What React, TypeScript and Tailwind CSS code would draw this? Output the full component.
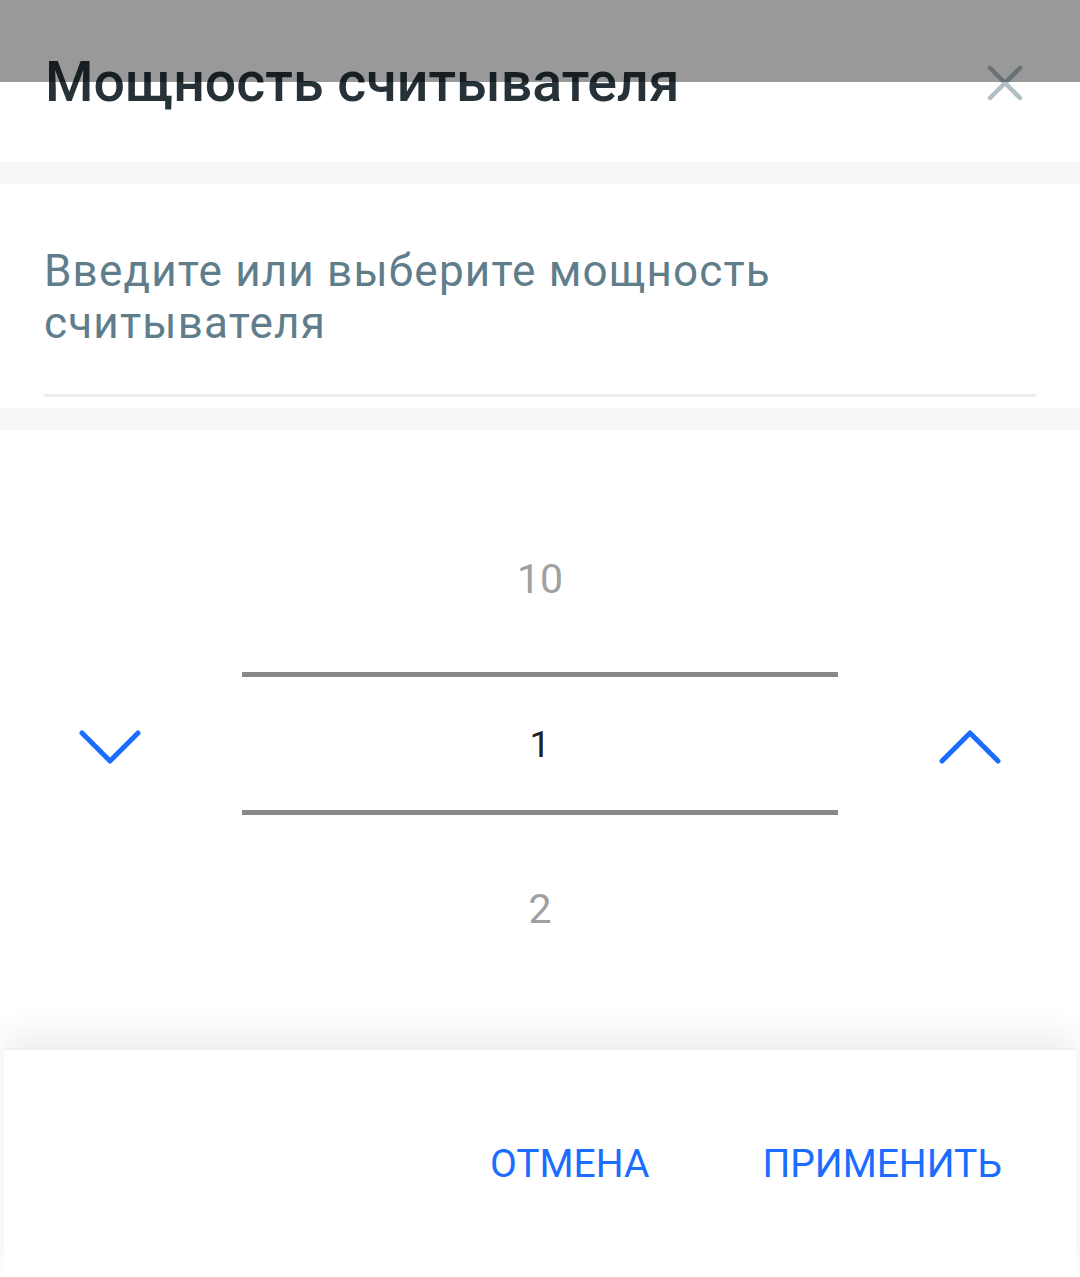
import React from 'react';

const Chevron = ({ up }: { up?: boolean }) => (
  <svg width="62" height="36" viewBox="0 0 62 36" fill="none">
    <path
      d={up ? 'M3 32 L31 4 L59 32' : 'M3 4 L31 32 L59 4'}
      stroke="#1a6dff"
      strokeWidth="5"
      strokeLinecap="round"
      strokeLinejoin="round"
    />
  </svg>
);

export default function App() {
  return (
    <div className="relative w-[1080px] h-[1277px] bg-white overflow-hidden font-['Roboto',sans-serif] flex flex-col">
      {/* Header */}
      <div className="h-[162px] flex items-center justify-between pl-[45px] pr-[57px] pt-[4px]">
        <h1 className="text-[55.5px] font-medium text-[#263238] leading-none">Мощность считывателя</h1>
        <svg width="36" height="36" viewBox="0 0 36 36" fill="none">
          <path d="M3 3 L33 33 M33 3 L3 33" stroke="#b0bec5" strokeWidth="4.5" strokeLinecap="round" />
        </svg>
      </div>

      <div className="h-[22px] bg-[#f5f6f8]" />

      {/* Input */}
      <div className="h-[224px] px-[44px] pt-[61px] flex flex-col">
        <p className="max-w-[800px] text-[44px] leading-[52px] text-[#607d8b] tracking-[1.2px]">
          Введите или выберите мощность считывателя
        </p>
        <div className="mt-auto mb-[11px] h-[3px] bg-[#eceff1]" />
      </div>

      <div className="h-[22px] bg-[#f5f6f8]" />

      {/* Picker */}
      <div className="flex items-center pt-[58px]">
        <div className="w-[242px] pl-[79px] flex items-center">
          <Chevron />
        </div>
        <div className="w-[596px] flex flex-col">
          <div className="h-[184px] flex items-center justify-center text-[41px] text-[#a0a0a0]">10</div>
          <div className="h-[5px] bg-[#888888]" />
          <div className="h-[133px] flex items-center justify-center text-[37px] text-[#212121] pt-[3px]">1</div>
          <div className="h-[5px] bg-[#888888]" />
          <div className="h-[190px] flex items-center justify-center text-[41px] text-[#a0a0a0]">2</div>
        </div>
        <div className="w-[242px] pr-[79px] flex items-center justify-end">
          <Chevron up />
        </div>
      </div>

      {/* Footer */}
      <div className="mt-auto h-[229px] mx-[4px] bg-white border-t-2 border-[#f2f2f2] shadow-[0_-14px_30px_rgba(0,0,0,0.07)] flex items-center justify-end gap-[113px] pr-[74px] pt-[2px]">
        <button className="text-[39px] text-[#1a6dff] leading-none">ОТМЕНА</button>
        <button className="text-[39px] text-[#1a6dff] leading-none">ПРИМЕНИТЬ</button>
      </div>

      {/* dim overlay */}
      <div className="absolute top-0 left-0 w-full h-[82px] bg-black/40" />
    </div>
  );
}
